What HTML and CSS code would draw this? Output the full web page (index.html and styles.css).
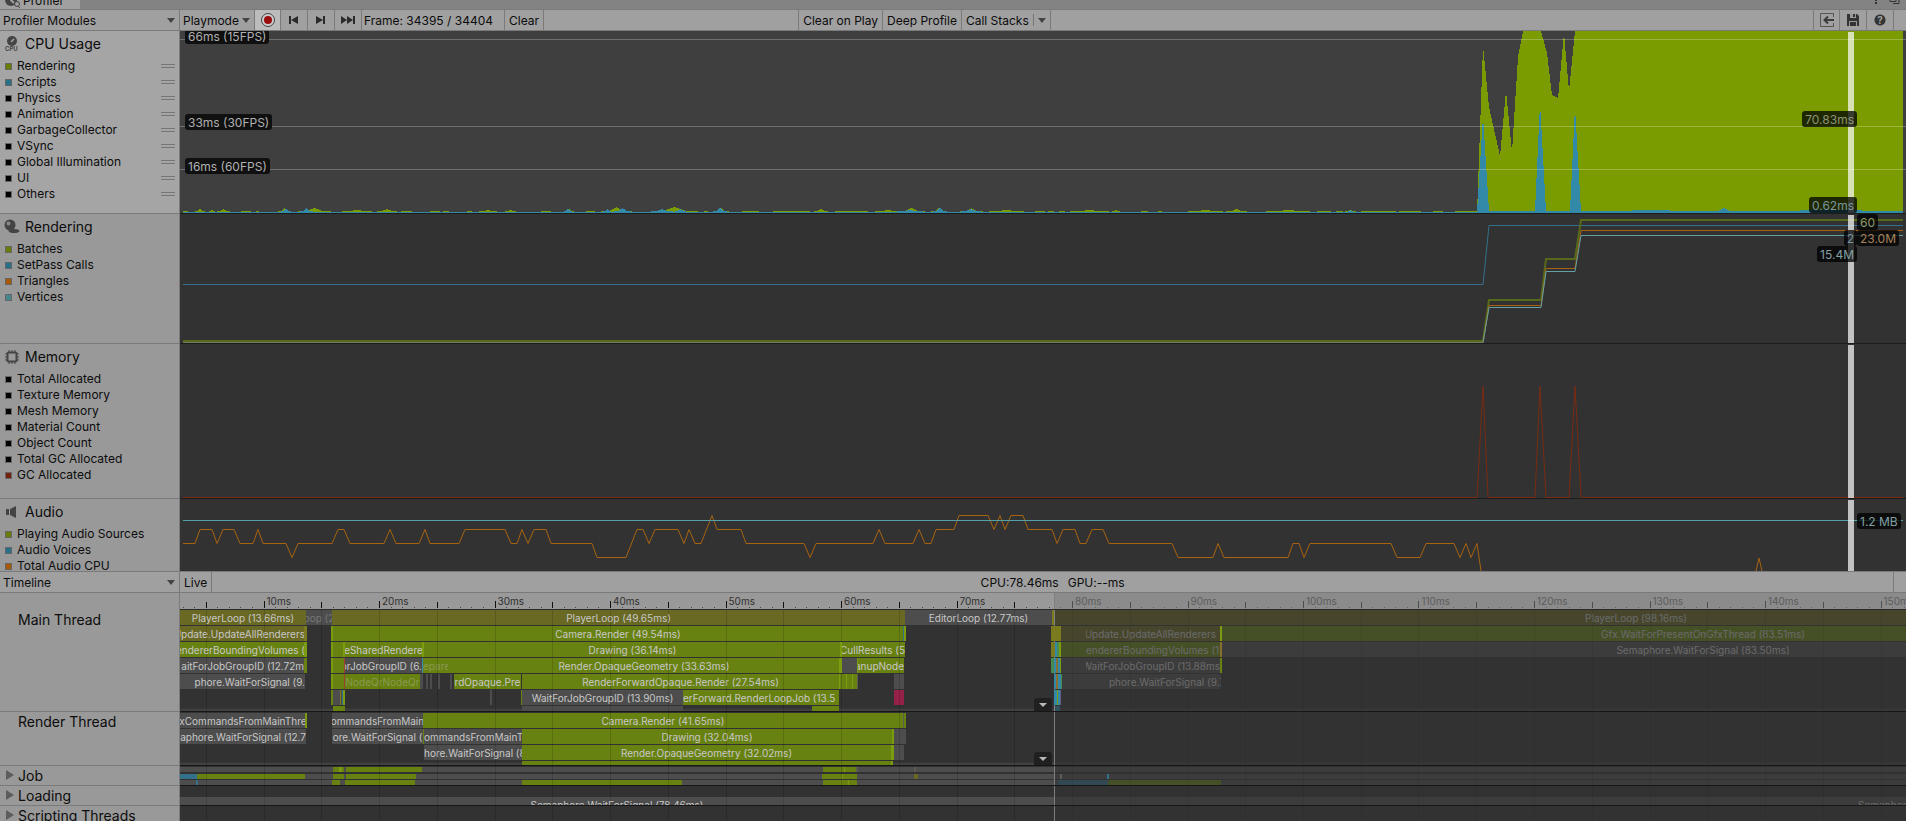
FILE: index.html
```html
<!DOCTYPE html>
<html lang="en">
<head>
  <meta charset="UTF-8">
  <meta name="viewport" content="width=device-width, initial-scale=1.0">
  <title>Profiler</title>
  <link rel="stylesheet" href="styles.css">
</head>
<body>
  <header class="tabs">
    <div class="tab">
      <svg class="tab-icon" width="16" height="16" viewBox="0 0 16 16"><circle cx="6" cy="7" r="6" fill="#444"/><path d="M6 3v4l3 3" stroke="#a0a0a0" stroke-width="2" fill="none"/><circle cx="12" cy="11" r="2.5" stroke="#444" fill="#a0a0a0"/><path d="M13 13l2 2" stroke="#444"/></svg>
      <span>Profiler</span>
    </div>
    <svg class="window-icons" width="30" height="5" viewBox="0 0 30 5"><path d="M5 0h2v1h-2zM5 2h2v2h-2z" fill="#333"/><path d="M20 0v1.500h6v-1.500M23 3.500h6v-3.500" stroke="#333" fill="none"/></svg>
  </header>

  <div class="toolbar">
    <label class="drop drop-side">
      <select aria-label="Profiler Modules"><option>Profiler Modules</option></select>
    </label>
    <label class="drop drop-mode">
      <select aria-label="Target"><option>Playmode</option></select>
    </label>
    <button class="icon-btn record" aria-label="Record">
      <svg width="16" height="16" viewBox="0 0 16 16"><circle cx="8" cy="8" r="6.500" fill="#ccc" stroke="#444"/><circle cx="8" cy="8" r="4" fill="#980c0c"/></svg>
    </button>
    <button class="icon-btn" aria-label="Previous frame">
      <svg width="16" height="16" viewBox="0 0 16 16" fill="#2b2b2b"><path d="M3 4h2v8H3zM12 4v8L5 8z"/></svg>
    </button>
    <button class="icon-btn" aria-label="Next frame">
      <svg width="16" height="16" viewBox="0 0 16 16" fill="#2b2b2b"><path d="M10 4h2v8h-2zM3 4v8l7-4z"/></svg>
    </button>
    <button class="icon-btn" aria-label="Current frame">
      <svg width="16" height="16" viewBox="0 0 16 16" fill="#2b2b2b"><path d="M13 4h2v8h-2zM1 4v8l6-4zM7 4v8l6-4z"/></svg>
    </button>
    <span class="frame-count">Frame: 34395 / 34404</span>
    <button class="btn">Clear</button>
    <span class="space"></span>
    <button class="btn first">Clear on Play</button>
    <button class="btn">Deep Profile</button>
    <button class="btn plain">Call Stacks</button>
    <button class="caret" aria-label="Call Stacks options"></button>
    <span class="space-wide"></span>
    <button class="icon-btn first" aria-label="Load">
      <svg width="16" height="16" viewBox="0 0 16 16" fill="none" stroke="#3c3c3c"><path d="M14.500 5V1.500H1.500v13h13V11" stroke="#555"/><path d="M15 8H6M9 4.500L5.500 8 9 11.500" stroke-width="2"/></svg>
    </button>
    <button class="icon-btn" aria-label="Save">
      <svg width="14" height="14" viewBox="0 0 14 14"><path d="M1 1h10l2 2v10H1z" fill="#333"/><path d="M4 1h6v4H4zM3 8h8v5H3z" fill="#999"/><path d="M7 1h2v3H7zM4 9h6v4H4z" fill="#333"/></svg>
    </button>
    <button class="icon-btn help" aria-label="Help">?</button>
    <button class="more" aria-label="More">⋮</button>
  </div>

  <main class="modules">
    <section class="module module-cpu">
      <div class="side">
        <h2>
          <svg width="16" height="16" viewBox="0 0 16 16"><circle cx="8" cy="5" r="5" fill="#444"/><path d="M7 6l3-3" stroke="#a5a5a5" stroke-width="1.500"/><text x="1" y="15" class="tiny">CPU</text></svg>
          CPU Usage
        </h2>
        <ul class="legend sortable">
          <li class="green">Rendering</li>
          <li class="blue">Scripts</li>
          <li>Physics</li>
          <li>Animation</li>
          <li>GarbageCollector</li>
          <li>VSync</li>
          <li>Global Illumination</li>
          <li>UI</li>
          <li>Others</li>
        </ul>
      </div>
      <div class="chart">
        <svg class="plot" viewBox="0 0 1726 182" preserveAspectRatio="none" shape-rendering="crispEdges">
          <path id="noise-green" fill="#7b9c00"/>
          <path fill="#7b9c00" d="M1297 182L1303 15L1309 76L1320 125L1326 60L1332 121L1338 26L1343 0H1361L1367 22L1372 64L1378 67L1384 2L1389 60L1395 0H1723V182Z"/>
          <path fill="#338aa8" d="M3 181H1297L1303 85L1309 180H1355L1360 72L1366 180H1390L1395 76L1401 180H1443L1460 179H1480L1500 180H1538L1544 177L1550 180H1600L1640 179L1723 180V182H3Z"/>
          <path id="noise-blue" fill="#338aa8"/>
          <path class="ref-line" d="M0 8.500H1726M0 95.500H1726M0 138.500H1726"/>
        </svg>
        <span class="chip fps fps-15">66ms (15FPS)</span>
        <span class="chip fps fps-30">33ms (30FPS)</span>
        <span class="chip fps fps-60">16ms (60FPS)</span>
        <div class="marker">
          <span class="chip before cpu-top">70.83ms</span>
          <span class="chip before cpu-low">0.62ms</span>
        </div>
      </div>
    </section>

    <section class="module module-rendering">
      <div class="side">
        <h2>
          <svg width="16" height="16" viewBox="0 0 16 16" fill="#444"><ellipse cx="10" cy="12" rx="5.500" ry="2"/><circle cx="6" cy="6" r="5.500"/><circle cx="4.500" cy="4.500" r="2" fill="#888"/></svg>
          Rendering
        </h2>
        <ul class="legend">
          <li class="green">Batches</li>
          <li class="blue">SetPass Calls</li>
          <li class="orange">Triangles</li>
          <li class="teal">Vertices</li>
        </ul>
      </div>
      <div class="chart">
        <svg class="plot" viewBox="0 0 1726 129" preserveAspectRatio="none">
          <path class="line" stroke="#34708a" d="M3 70.500H1303L1309 11.500H1723"/>
          <path class="line thick" stroke="#566a1a" d="M3 127H1303L1309 86H1361L1366 45H1395L1401 6H1723"/>
          <path class="line" stroke="#a8600f" d="M3 128.500H1303L1309 91.500H1361L1366 54.500H1395L1401 16.500H1723"/>
          <path class="line" stroke="#62a0a6" d="M1303 128.500L1309 93.500H1361L1366 57.500H1395L1401 21.500H1723"/>
          <path class="line" stroke="#6f7f63" d="M3 128.500H1303"/>
        </svg>
        <div class="marker">
          <span class="chip after row-0 c-green">60</span>
          <span class="chip before row-1 c-blue">2</span>
          <span class="chip after row-1 c-orange">23.0M</span>
          <span class="chip before row-2 c-teal">15.4M</span>
        </div>
      </div>
    </section>

    <section class="module module-memory">
      <div class="side">
        <h2>
          <svg width="16" height="16" viewBox="0 0 16 16"><path d="M5 1v14M8 1v14M11 1v14M1 5h14M1 8h14M1 11h14" stroke="#444"/><rect x="3.500" y="3.500" width="9" height="9" rx="1" fill="#999" stroke="#444" stroke-width="2"/></svg>
          Memory
        </h2>
        <ul class="legend">
          <li>Total Allocated</li>
          <li>Texture Memory</li>
          <li>Mesh Memory</li>
          <li>Material Count</li>
          <li>Object Count</li>
          <li>Total GC Allocated</li>
          <li class="red">GC Allocated</li>
        </ul>
      </div>
      <div class="chart">
        <svg class="plot" viewBox="0 0 1726 154" preserveAspectRatio="none">
          <path class="line" stroke="#7a2b12" d="M3 153.500H1297L1303 42L1308 153.500H1355L1360 42L1366 153.500H1389L1395 42L1401 153.500H1723"/>
        </svg>
        <div class="marker"></div>
      </div>
    </section>

    <section class="module module-audio">
      <div class="side">
        <h2>
          <svg width="16" height="16" viewBox="0 0 16 16" fill="#444"><path d="M2 5h3v6H2zM6 5l6-3v12l-6-3z"/></svg>
          Audio
        </h2>
        <ul class="legend">
          <li class="green">Playing Audio Sources</li>
          <li class="blue">Audio Voices</li>
          <li class="orange">Total Audio CPU</li>
        </ul>
      </div>
      <div class="chart">
        <svg class="plot" viewBox="0 0 1726 72" preserveAspectRatio="none">
          <path id="audio-cpu" class="line" stroke="#a8630f"/>
          <path class="line" stroke="#a8630f" d="M1576 72L1579 59L1582 72"/>
          <path class="line" stroke="#52a0a8" d="M3 21.500H1723"/>
        </svg>
        <div class="marker">
          <span class="chip after audio-mem c-teal">1.2 MB</span>
        </div>
      </div>
    </section>
  </main>

  <div class="toolbar toolbar-detail">
    <label class="drop drop-side">
      <select aria-label="View"><option>Timeline</option></select>
    </label>
    <button class="btn">Live</button>
    <div class="frame-times"><span>CPU:78.46ms</span><span>GPU:--ms</span></div>
    <button class="more first" aria-label="More">⋮</button>
  </div>

  <section class="timeline">
    <div class="track track-ruler">
      <div class="side"></div>
      <div class="lane" id="ruler"></div>
    </div>
    <div class="track track-main">
      <div class="side"><h3>Main Thread</h3></div>
      <div class="lane" id="main-thread"></div>
    </div>
    <div class="track track-render">
      <div class="side"><h3>Render Thread</h3></div>
      <div class="lane" id="render-thread"></div>
    </div>
    <div class="track track-group">
      <div class="side"><h3 class="folded">Job</h3></div>
      <div class="lane" id="jobs"></div>
    </div>
    <div class="track track-group">
      <div class="side"><h3 class="folded">Loading</h3></div>
      <div class="lane" id="loading"></div>
    </div>
    <div class="track track-last">
      <div class="side"><h3 class="folded">Scripting Threads</h3></div>
      <div class="lane" id="scripting"></div>
    </div>
  </section>

  <script src="profiler.js"></script>
</body>
</html>
```
FILE: styles.css
```css
*,
*::before,
*::after {
  box-sizing: border-box;
}
body {
  margin: 0;
  height: 100vh;
  display: flex;
  flex-direction: column;
  overflow: hidden;
  background: #323232;
  color: #0c0c0c;
  font-family: Inter, "Liberation Sans", sans-serif;
  font-size: 12px;
  line-height: 16px;
}
button,
select {
  font: inherit;
  color: inherit;
  background: none;
  border: 0;
  border-radius: 0;
  margin: 0;
  padding: 0;
}
svg {
  display: block;
  flex: none;
}

/* tab strip */
.tabs {
  display: flex;
  flex: none;
  justify-content: space-between;
  height: 9px;
  overflow: hidden;
  background: #838383;
}
.tab {
  display: flex;
  align-items: flex-end;
  gap: 2px;
  width: 80px;
  padding: 0 0 0 5px;
  background: #a0a0a0;
}
.window-icons {
  margin-right: 6px;
}

/* toolbars */
.toolbar {
  display: flex;
  flex: none;
  height: 22px;
  overflow: hidden;
  background: #a0a0a0;
  border-top: 1px solid #7a7a7a;
  border-bottom: 1px solid #7a7a7a;
}
.drop {
  position: relative;
  display: flex;
  flex: none;
  border-right: 1px solid #7a7a7a;
}
.drop select {
  width: 100%;
  appearance: none;
  padding: 2px 0 0 3px;
}
.drop::after {
  content: "";
  position: absolute;
  right: 4px;
  top: 8px;
  border: 4px solid transparent;
  border-top: 5px solid #444;
  border-bottom: 0;
  pointer-events: none;
}
.drop-side {
  width: 180px;
}
.drop-mode {
  width: 75px;
}
.btn,
.icon-btn {
  flex: none;
  padding: 2px 4px 0;
  border-right: 1px solid #7a7a7a;
}
.btn.plain {
  border-right: 0;
}
.icon-btn {
  display: flex;
  align-items: center;
  justify-content: center;
  width: 27px;
  padding: 0;
}
.icon-btn.record {
  width: 26px;
  background: #bcbcbc;
}
.first {
  border-left: 1px solid #7a7a7a;
}
.frame-count {
  flex: none;
  width: 143px;
  padding: 3px 2px;
  border-right: 1px solid #7a7a7a;
}
.space {
  flex: 1;
}
.space-wide {
  flex: 3;
}
.caret {
  position: relative;
  width: 18px;
  border-right: 1px solid #7a7a7a;
}
.caret::before {
  content: "";
  position: absolute;
  left: 0;
  top: 4px;
  height: 12px;
  border-left: 1px solid #777;
}
.caret::after {
  content: "";
  position: absolute;
  left: 5px;
  top: 8px;
  border: 4px solid transparent;
  border-top: 5px solid #444;
  border-bottom: 0;
}
.help {
  font-size: 10px;
  font-weight: bold;
  color: #a0a0a0;
  background: radial-gradient(circle, #333 5px, transparent 6px);
}
.more {
  flex: none;
  width: 12px;
  padding-left: 8px;
  overflow: hidden;
  font-size: 14px;
}
.more.first {
  width: 13px;
}
.frame-times {
  display: flex;
  flex: 1;
  justify-content: center;
  gap: 9px;
  padding: 3px 0 0;
}

/* chart modules */
.modules {
  display: flex;
  flex: 1;
  flex-direction: column;
  min-height: 0;
  overflow: hidden;
}
.module {
  display: flex;
  flex: none;
}
.module-cpu {
  height: 183px;
}
.module-rendering {
  height: 130px;
}
.module-memory {
  height: 155px;
}
.module-audio {
  flex: 1;
  min-height: 0;
}
.side {
  flex: none;
  width: 180px;
  overflow: hidden;
  background: #999;
  border-right: 1px solid #7a7a7a;
  border-bottom: 1px solid #7a7a7a;
}
.module-cpu .side {
  background: #a5a5a5;
}
.module-audio .side {
  border-bottom: 0;
}
h2 {
  display: flex;
  align-items: center;
  gap: 5px;
  height: 26px;
  margin: 0 0 1px;
  padding-left: 4px;
  font-size: 14px;
  font-weight: normal;
}
.tiny {
  font-size: 6px;
  font-weight: bold;
  fill: #444;
}
.legend {
  margin: 0;
  padding: 0 4px 0 5px;
  list-style: none;
}
.legend li {
  display: flex;
  align-items: center;
  height: 16px;
}
.legend li::before {
  content: "";
  width: 7px;
  height: 7px;
  margin-right: 5px;
  background: #000;
  border: 1px solid #666;
}
.sortable li::after {
  content: "";
  width: 14px;
  height: 4px;
  margin-left: auto;
  border: solid #757575;
  border-width: 1px 0;
}
.legend .green::before {
  background: #667f00;
}
.legend .blue::before {
  background: #27708a;
}
.legend .orange::before {
  background: #a85a00;
}
.legend .teal::before {
  background: #45868c;
}
.legend .red::before {
  background: #74200a;
}
.chart {
  position: relative;
  flex: 1;
  overflow: hidden;
  border-bottom: 1px solid #1c1c1c;
  background: #323232;
}
.module-cpu .chart {
  background: #3f3f3f;
}
.module-audio .chart {
  border-bottom: 0;
}
.plot {
  width: 100%;
  height: 100%;
}
.line {
  fill: none;
  stroke-width: 1px;
}
.thick {
  stroke-width: 2px;
}
.ref-line {
  fill: none;
  stroke: #fff;
  stroke-opacity: 0.25;
}

/* value chips over the charts */
.chip {
  position: absolute;
  height: 16px;
  padding: 0 3px;
  border-radius: 3px;
  background: rgba(0, 0, 0, 0.75);
  color: #8d9478;
  line-height: 18px;
  white-space: nowrap;
}
.fps {
  left: 5px;
  background: #101010;
  color: #b0b0b0;
}
.fps-15 {
  top: -3px;
}
.fps-30 {
  top: 83px;
}
.fps-60 {
  top: 127px;
}
.marker {
  position: absolute;
  left: 96.64%;
  top: 1px;
  bottom: 0;
  width: 6px;
  background: rgba(255, 255, 255, 0.7);
}
.before {
  right: -3px;
}
.after {
  left: 9px;
}
.cpu-top {
  top: 79px;
}
.cpu-low {
  top: 165px;
  color: #7895a0;
}
.row-0 {
  top: -1px;
}
.row-1 {
  top: 15px;
}
.row-2 {
  top: 31px;
}
.audio-mem {
  top: 13px;
}
.c-green {
  color: #8f9b66;
}
.c-blue {
  color: #7895a0;
}
.c-orange {
  color: #a8835a;
}
.c-teal {
  color: #83a0a3;
}

/* timeline */
.timeline {
  flex: none;
  height: 228px;
  overflow: hidden;
}
.track {
  display: flex;
}
.track-ruler {
  height: 17px;
}
.track-ruler .side {
  border-bottom: 0;
}
.track-main {
  height: 102px;
}
.track-render {
  height: 54px;
}
.track-group,
.track-last {
  height: 20px;
}
h3 {
  margin: 0;
  padding: 2px 0 0 18px;
  font-size: 14px;
  font-weight: normal;
  white-space: nowrap;
}
.folded {
  position: relative;
}
.folded::before {
  content: "";
  position: absolute;
  left: 6px;
  top: 4px;
  border: 5px solid transparent;
  border-left: 8px solid #5c5c5c;
  border-right: 0;
}
.lane {
  position: relative;
  flex: 1;
  overflow: hidden;
  background: #323232;
  border-bottom: 1px solid #161616;
}
.track-main .lane,
.track-render .lane {
  box-shadow: inset 0 -3px 2px -1px #444;
}
#ruler {
  background: #999;
  border-bottom: 1px solid #2a2a2a;
  font-size: 10px;
  line-height: 12px;
  color: #303030;
}
.tick {
  position: absolute;
  bottom: 1px;
  width: 1px;
  height: 1px;
  background: #444;
}
.tick.half {
  height: 6px;
  background: #111;
}
.tick.major {
  height: 7px;
  background: #111;
}
.tick-label {
  position: absolute;
  top: 2px;
  padding-left: 3px;
}
.grid-line {
  position: absolute;
  z-index: 1;
  top: 0;
  bottom: 0;
  width: 1px;
  background: rgba(0, 0, 0, 0.14);
}
.shade {
  position: absolute;
  z-index: 2;
  left: 50.64%;
  right: 0;
  top: 0;
  bottom: 0;
  background: rgba(50, 50, 50, 0.63);
  border-left: 1px solid #7e7e7e;
}
#ruler .shade {
  background: rgba(128, 128, 128, 0.55);
}
.bar {
  position: absolute;
  display: flex;
  justify-content: center;
  height: 15px;
  overflow: hidden;
  font-size: 10px;
  line-height: 17px;
  white-space: nowrap;
  color: #c8c8c8;
}
.bar.start {
  justify-content: flex-start;
}
.bar.end {
  justify-content: flex-end;
}
.bar.faint {
  color: rgba(200, 200, 200, 0.35);
}
.bar.sliver {
  z-index: 3;
}
.bar.thin {
  height: 5px;
}
.k-green {
  background: #688212;
}
.k-lime {
  background: #7c9c10;
}
.k-olive {
  background: #6a6924;
}
.k-gold {
  background: #7c7a1e;
}
.k-gray {
  background: #4d4d4d;
}
.k-ash {
  background: #5c5c52;
}
.k-blue {
  background: #33708a;
}
.k-sky {
  background: #338aa8;
}
.k-mint {
  background: #488a50;
}
.k-brown {
  background: #8a7030;
}
.k-violet {
  background: #60608c;
}
.k-red {
  background: #a04030;
}
.k-pink {
  background: #952148;
}
.scroll-down {
  position: absolute;
  z-index: 2;
  left: 49.48%;
  bottom: 0;
  width: 18px;
  height: 13px;
  border-radius: 3px 3px 0 0;
  background: #202020;
}
.scroll-down::after {
  content: "";
  position: absolute;
  left: 5px;
  top: 5px;
  border: 4px solid transparent;
  border-top: 4px solid #b8b8b8;
  border-bottom: 0;
}
```
FILE: profiler.js
```js
// All x values are in view units, the visible range is VIEW units wide
var VIEW = 1726;
var MS = 11.55;
var ORIGIN = -32;

function pct(x) {
  return (x / VIEW * 100) + "%";
}

function add(parent, cls, x) {
  var el = document.createElement("div");
  el.className = cls;
  if (x !== undefined) el.style.left = pct(x);
  parent.appendChild(el);
  return el;
}

// [row, from, to, color, label, modifiers]
var mainThread = [
  [0, 0, 126, "olive", "PlayerLoop (13.66ms)"],
  [0, 126, 152, "gray", "oop (2", "faint"],
  [0, 152, 725, "olive", "PlayerLoop (49.65ms)"],
  [0, 725, 872, "gray", "EditorLoop (12.77ms)"],
  [0, 872, 874, "gold"],
  [0, 874, 2038, "olive", "PlayerLoop (98.16ms)"],
  [1, 0, 125, "olive", "Update.UpdateAllRenderers", "end"],
  [1, 124, 127, "gold"],
  [1, 151, 725, "green", "Camera.Render (49.54ms)"],
  [1, 151, 153, "lime"],
  [1, 723, 724, "blue"],
  [1, 724, 726, "lime"],
  [1, 871, 881, "gold"],
  [1, 881, 1040, "olive"],
  [1, 906, 1036, "none", "Update.UpdateAllRenderers", "end"],
  [1, 1040, 1042, "lime"],
  [1, 1042, 2004, "green", "Gfx.WaitForPresentOnGfxThread (83.51ms)"],
  [2, 0, 125, "green", "endererBoundingVolumes (", "end"],
  [2, 124, 127, "lime"],
  [2, 151, 164, "green"],
  [2, 151, 153, "lime"],
  [2, 164, 243, "green", "eSharedRendere"],
  [2, 163, 165, "lime"],
  [2, 244, 661, "green", "Drawing (36.14ms)"],
  [2, 242, 244, "lime"],
  [2, 662, 725, "green", "rCullResults (5", "end"],
  [2, 660, 662, "lime"],
  [2, 871, 875, "gold"],
  [2, 875, 877, "sky"],
  [2, 877, 879, "mint"],
  [2, 879, 881, "lime"],
  [2, 881, 1040, "green"],
  [2, 906, 1040, "none", "endererBoundingVolumes (1", "start"],
  [2, 1040, 1042, "brown"],
  [2, 1042, 2004, "gray", "Semaphore.WaitForSignal (83.50ms)"],
  [3, 0, 124, "gray", "aitForJobGroupID (12.72m", "end"],
  [3, 124, 127, "green"],
  [3, 151, 164, "green"],
  [3, 151, 153, "lime"],
  [3, 165, 242, "gray", "orJobGroupID (6.", "end"],
  [3, 164, 165, "red"],
  [3, 243, 274, "green", "epare", "start faint"],
  [3, 268, 660, "green", "Render.OpaqueGeometry (33.63ms)"],
  [3, 242, 243, "sky"],
  [3, 659, 662, "lime"],
  [3, 662, 677, "gray"],
  [3, 677, 678, "lime"],
  [3, 678, 724, "green", "anupNode", "end"],
  [3, 871, 874, "mint"],
  [3, 874, 876, "sky"],
  [3, 876, 878, "brown"],
  [3, 878, 880, "sky"],
  [3, 880, 881, "lime"],
  [3, 881, 1040, "gray"],
  [3, 906, 1040, "none", "WaitForJobGroupID (13.88ms", "end"],
  [3, 1040, 1042, "green"],
  [4, 0, 125, "gray", "phore.WaitForSignal (9.", "end"],
  [4, 151, 164, "green"],
  [4, 151, 153, "lime"],
  [4, 165, 240, "green", "NodeQrNodeQr", "faint"],
  [4, 164, 165, "red"],
  [4, 240, 243, "gray"],
  [4, 246, 248, "gray"],
  [4, 250, 252, "gray"],
  [4, 258, 260, "gray"],
  [4, 270, 272, "gray"],
  [4, 274, 341, "green", "rdOpaque.Pre"],
  [4, 342, 659, "green", "RenderForwardOpaque.Render (27.54ms)"],
  [4, 659, 677, "green"],
  [4, 659, 660, "lime"],
  [4, 666, 667, "lime"],
  [4, 672, 673, "lime"],
  [4, 677, 678, "ash"],
  [4, 714, 724, "gray"],
  [4, 874, 876, "sky"],
  [4, 876, 878, "brown"],
  [4, 878, 881, "sky"],
  [4, 881, 882, "mint"],
  [4, 882, 1041, "gray"],
  [4, 929, 1041, "none", "phore.WaitForSignal (9.7", "start"],
  [5, 151, 153, "green"],
  [5, 153, 163, "gray"],
  [5, 160, 161, "gold"],
  [5, 162, 163, "blue"],
  [5, 163, 165, "lime"],
  [5, 310, 312, "gray"],
  [5, 341, 342, "green"],
  [5, 342, 503, "gray", "WaitForJobGroupID (13.90ms)"],
  [5, 503, 659, "green", "erForward.RenderLoopJob (13.5", "start"],
  [5, 714, 724, "pink"],
  [5, 874, 877, "sky"],
  [5, 877, 878, "lime"],
  [5, 878, 880, "sky"],
  [5, 880, 881, "violet"],
  [6, 153, 165, "green"],
  [6, 342, 503, "gray"],
  [6, 632, 659, "green"],
  [6, 875, 880, "sky"]
];

var renderThread = [
  [0, 0, 126, "gray", "xCommandsFromMainThre"],
  [0, 125, 127, "lime"],
  [0, 152, 243, "gray", "ommandsFromMain"],
  [0, 243, 723, "green", "Camera.Render (41.65ms)"],
  [0, 723, 724, "ash"],
  [0, 724, 726, "green"],
  [1, 0, 126, "gray", "aphore.WaitForSignal (12.7", "end"],
  [1, 152, 243, "gray", "ore.WaitForSignal ("],
  [1, 244, 342, "gray", "ommandsFromMainT", "start"],
  [1, 243, 244, "green"],
  [1, 342, 712, "green", "Drawing (32.04ms)"],
  [1, 712, 714, "lime"],
  [1, 714, 726, "gray"],
  [2, 244, 342, "gray", "hore.WaitForSignal (8", "start"],
  [2, 342, 711, "green", "Render.OpaqueGeometry (32.02ms)"],
  [2, 711, 714, "lime"],
  [2, 714, 724, "gray"],
  [3, 342, 712, "green"],
  [3, 711, 713, "lime"]
];

var jobs = [
  [0, 0, 1726, "gray"],
  [0, 153, 242, "green"],
  [0, 159, 162, "lime"],
  [0, 164, 166, "gray"],
  [0, 643, 676, "green"],
  [0, 664, 665, "lime"],
  [0, 676, 678, "ash"],
  [0, 734, 736, "ash"],
  [1, 0, 1726, "gray"],
  [1, 0, 17, "blue"],
  [1, 17, 125, "green"],
  [1, 153, 236, "green"],
  [1, 164, 166, "gray"],
  [1, 642, 677, "green"],
  [1, 662, 663, "lime"],
  [1, 734, 738, "olive"],
  [1, 880, 882, "ash"],
  [1, 927, 929, "blue"],
  [2, 0, 1726, "gray"],
  [2, 16, 18, "blue"],
  [2, 152, 160, "green"],
  [2, 165, 235, "green"],
  [2, 342, 502, "green"],
  [2, 643, 677, "green"],
  [2, 668, 669, "lime"],
  [2, 878, 928, "blue"],
  [2, 928, 1041, "green"]
];

var loading = [
  [0, 0, 874, "gray", "Semaphore.WaitForSignal (78.46ms)"],
  [0, 874, 1678, "gray"],
  [0, 1678, 1900, "gray", "Semaphore.WaitForSignal", "start"]
];

function drawLane(id, bars, tops, extra) {
  var lane = document.getElementById(id);
  bars.forEach(function (b) {
    var narrow = b[2] - b[1] < 5 || (b[3] === "gold" && b[1] > 870);
    var el = add(lane, "bar k-" + b[3] + " " + (b[5] || "") + (narrow ? " sliver" : "") + (extra || ""), b[1]);
    el.style.width = pct(b[2] - b[1]);
    el.style.top = tops[b[0]] + "px";
    if (b[4]) el.textContent = b[4];
  });
  for (var ms = 5; ms <= 150; ms += 5) {
    add(lane, "grid-line", ms * MS + ORIGIN);
  }
  add(lane, "shade");
}

function drawRuler() {
  var ruler = document.getElementById("ruler");
  for (var ms = 3; ms <= 152; ms++) {
    var x = ms * MS + ORIGIN;
    var cls = ms % 10 === 0 ? " major" : ms % 5 === 0 ? " half" : "";
    add(ruler, "tick" + cls, x);
    if (ms % 10 === 0) {
      add(ruler, "tick-label", x).textContent = ms + "ms";
    }
  }
  add(ruler, "shade");
}

// Small bumps along the bottom of the CPU chart: [from, to, height]
function bumps(id, list) {
  var d = list.map(function (s) {
    var base = 181, mid = (s[0] + s[1]) / 2, q = (s[1] - s[0]) / 4;
    if (s[2] === 1) {
      return "M" + s[0] + " " + base + "V180H" + s[1] + "V" + base + "Z";
    }
    return "M" + s[0] + " " + base + "V180H" + (mid - q) + "L" + mid + " " + (base - s[2]) + "L" + (mid + q) + " 180H" + s[1] + "V" + base + "Z";
  });
  document.getElementById(id).setAttribute("d", d.join(""));
}

bumps("noise-green", [
  [3, 8, 1], [15, 25, 3], [29, 35, 2], [37, 50, 3], [61, 71, 1], [76, 79, 1], [98, 111, 4],
  [118, 151, 4], [162, 192, 2], [197, 217, 3], [221, 232, 1], [250, 260, 1], [263, 269, 1],
  [287, 292, 1], [299, 317, 2], [325, 336, 2], [361, 371, 1], [384, 394, 4], [406, 415, 1],
  [421, 452, 5], [471, 518, 5], [524, 528, 1], [533, 549, 4], [562, 579, 1], [593, 630, 1],
  [634, 648, 3], [655, 688, 1], [695, 721, 2], [718, 745, 4], [751, 767, 4], [780, 803, 4],
  [809, 844, 2], [855, 865, 1], [868, 874, 1], [879, 885, 1], [890, 929, 2], [932, 940, 2],
  [961, 968, 1], [978, 982, 1], [1008, 1043, 2], [1046, 1067, 3], [1086, 1130, 2],
  [1137, 1151, 1], [1156, 1163, 1], [1165, 1176, 2], [1181, 1216, 1], [1219, 1241, 1],
  [1253, 1263, 1], [1275, 1297, 1]
]);
bumps("noise-blue", [
  [101, 111, 3], [120, 133, 4], [384, 392, 4], [423, 431, 3], [434, 451, 4], [471, 493, 3],
  [495, 506, 3], [533, 547, 4], [717, 743, 2], [753, 767, 4], [781, 801, 3], [1168, 1173, 2]
]);

// Total Audio CPU, one letter for each level
var levels = { D: 16.5, A: 30.5, B: 44.5, C: 58.5, X: 72 };
var audio = "3B 15B 20A 32A 37B 43A 54A 60B 73B 78A 83B 106B 112C 118B 152B 158A 164A 170B 204B 210A 216B " +
  "239B 245A 250B 279B 285A 325A 331B 337B 342A 348B 354A 366A 371B 412B 417C 446C 457A 463A 469B 475A " +
  "498A 504B 509A 515B 521B 532D 537A 561A 566B 624B 630C 636B 693B 699A 705B 733B 739A 745B 751B 756A " +
  "774A 779D 808D 814A 820D 825A 831D 843D 848A 872A 877B 883A 895A 900B 906B 912A 923A 929B 992B 998C " +
  "1033C 1038B 1044C 1108C 1113B 1119B 1124C 1130B 1211B 1217C 1240C 1246B 1274B 1280C 1286B 1291C 1297B 1301X";
document.getElementById("audio-cpu").setAttribute("d", "M" + audio.split(" ").map(function (p) {
  return parseInt(p, 10) + " " + levels[p.slice(-1)];
}).join("L"));

drawRuler();
drawLane("main-thread", mainThread, [0, 16, 32, 48, 64, 80, 96]);
drawLane("render-thread", renderThread, [1, 17, 33, 49]);
drawLane("jobs", jobs, [1, 8, 14], " thin");
drawLane("loading", loading, [11]);
drawLane("scripting", [], []);

["main-thread", "render-thread"].forEach(function (id) {
  var btn = document.createElement("button");
  btn.className = "scroll-down";
  btn.setAttribute("aria-label", "Show more rows");
  document.getElementById(id).appendChild(btn);
});
```
